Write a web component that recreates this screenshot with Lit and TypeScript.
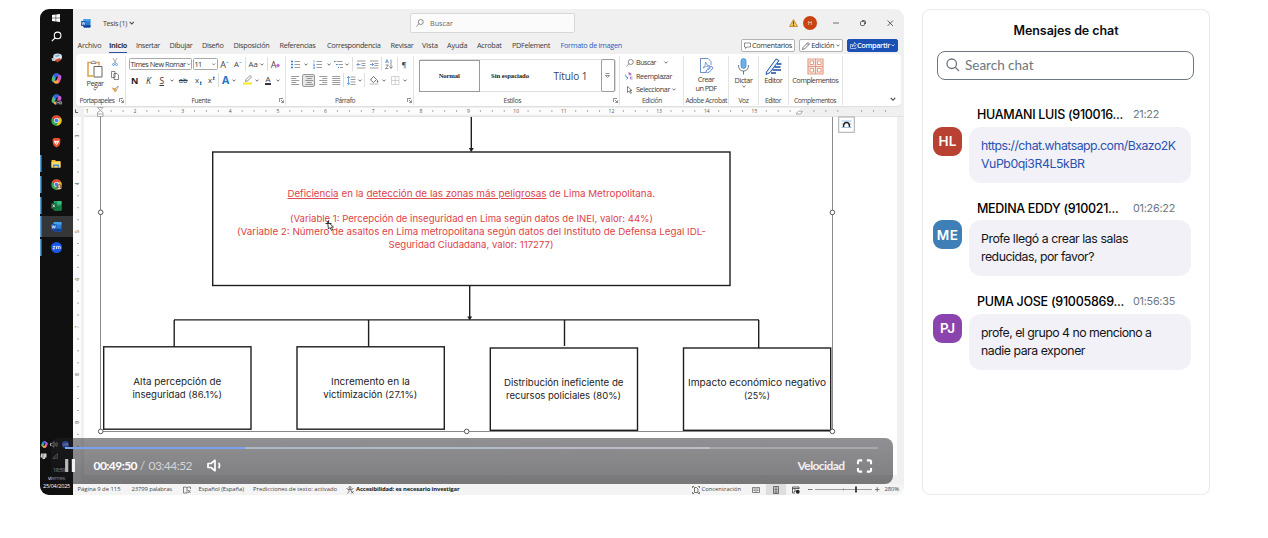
import { LitElement, html, svg, css, nothing } from "lit";
import { customElement, property } from "lit/decorators.js";

/* Text tracked so that it occupies a given width. */
@customElement("fit-text")
class FitText extends LitElement {
  @property({ type: Number }) w = 0;
  static styles = css`
    :host { display: inline-block; white-space: nowrap; flex: none; }
  `;
  render() {
    return html`<slot></slot>`;
  }
  firstUpdated() {
    const n = (this.textContent || "").length;
    if (!this.w || !n) return;
    const natural = this.getBoundingClientRect().width;
    this.style.letterSpacing = `${(this.w - natural) / n}px`;
  }
}

type Item = [number, number, unknown];

/* A toolbar line: items given by start and width along the line. */
const line = (origin: number, items: Item[], cls = "") => {
  let at = origin;
  return html`<div class="line ${cls}">${items.map(([x, w, body]) => {
    const gap = x - at;
    at = x + w;
    return html`<div class="cell" style="margin-left:${gap.toFixed(2)}px;width:${w}px">${body}</div>`;
  })}</div>`;
};

const t = (s: string, w: number, cls = "") => html`<fit-text class=${cls} w=${w}>${s}</fit-text>`;

const icon = (w: number, h: number, vb: string, body: unknown) =>
  html`<svg width=${w} height=${h} viewBox=${vb} fill="none">${body}</svg>`;

const chev = (w = 4) => icon(w, w * 0.75, "0 0 8 6", svg`<path d="M1 1.2 4 4.4 7 1.2" stroke="#444" stroke-width="1.5"/>`);
const sep = html`<i class="sep"></i>`;
const launcher = icon(5, 5, "0 0 10 10", svg`<path d="M1 8V1h7M4 4l5 5M9 4.5V9H4.500" stroke="#555" stroke-width="1.3"/>`);

const wordLogo = (w: number) => icon(w, w * 0.9, "0 0 20 18", svg`
  <rect x="5" y="0" width="15" height="18" rx="1.500" fill="#2b7cd3"/>
  <path d="M5 1.500Q5 0 6.500 0h12Q20 0 20 1.500V5H5z" fill="#41a5ee"/>
  <path d="M5 13h15v3.500q0 1.500-1.500 1.500h-12Q5 18 5 16.500z" fill="#103f91"/>
  <rect x="0" y="4" width="10.500" height="10.500" rx="1" fill="#185abd"/>
  <path d="M2 6.500 3.500 12 5.200 7 7 12 8.500 6.500" stroke="#fff" stroke-width="1.300"/>`);

const chromeArt = svg`
  <circle cx="10" cy="10" r="9.500" fill="#34a853"/>
  <path d="M1.800 5.200A9.500 9.500 0 0 1 18.200 5.200L18.300 5.700H10L6.300 12.200z" fill="#ea4335"/>
  <path d="M18.300 5.700A9.500 9.500 0 0 1 9.800 19.500L13.800 12.200 10 5.700z" fill="#fbbc04"/>
  <circle cx="10" cy="10" r="4.600" fill="#fff"/><circle cx="10" cy="10" r="3.600" fill="#4285f4"/>`;

const copilotArt = svg`
  <path d="M3.500 4.500Q5 1 9 1h3q2.500 0 3.500 3l.500 2H10L7 14q-1 3-3.500 2.500Q.500 15.500 1.500 11z" fill="#2ea8e0"/>
  <path d="M6 2q1-1 3-1h3q2.500 0 3.500 3l.500 2h-6L8 10 5 4z" fill="#3b62dd"/>
  <path d="M16.500 15.500Q15 19 11 19H8q-2.500 0-3.500-3L4 14h6l3-8q1-3 3.500-2.500 3 1 2 5.500z" fill="#ec5a93"/>
  <path d="M14 18q-1 1-3 1H8q-2.500 0-3.500-3L4 14h6l2-3z" fill="#f6a93d"/>
  <path d="M1.500 11l1.500-5 3.500 4L5.500 14l-3 1q-1.500-1-1-4z" fill="#58c45a"/>
  <path d="M13.500 5q1-2 3-1.500 3 1 2 5.500l-1 2.500-4-3z" fill="#b660e4"/>`;

const shared = css`
  .line { display: flex; align-items: center; }
  .cell { display: flex; align-items: center; justify-content: center; flex: none; }
  svg { display: block; flex: none; overflow: visible; }
`;

@customElement("task-bar")
class TaskBar extends LitElement {
  static styles = [shared, css`
    :host { display: flex; flex-direction: column; width: 33px; background: #101010; color: #ddd;
      font-family: "Open Sans", sans-serif; }
    .app { height: 21.1px; display: flex; align-items: center; justify-content: center; flex: none; padding-right: .500px;
      background: linear-gradient(transparent, transparent) no-repeat 0 50% / 1.500px 17px; }
    .app.first { height: 16px; padding-top: 1px; }
    .app.running { background-image: linear-gradient(#5a9fd8, #5a9fd8); }
    .app.active { background-color: #343638; background-size: 1.500px 21px; }
    .spacer { flex: 1; }
    .tray { height: 12px; }
    .clock { display: flex; flex-direction: column; align-items: flex-end; font-size: 5.500px; line-height: 8px;
      padding: 4px 3px 5px 0; color: #f2f2f2; }
    .mid { padding-right: 5px; }
    .date { color: #fff; }
  `];
  render() {
    const apps: [string, unknown][] = [
      ["first", icon(8, 8, "0 0 10 10", svg`<path d="M0 1.200 4.600.6v4.100H0zM5.200.500 10 0v4.700H5.200zM0 5.300h4.600v4.100L0 8.800zM5.200 5.300H10V10l-4.800-.600z" fill="#fff"/>`)],
      ["", icon(11, 11, "0 0 20 20", svg`<circle cx="12" cy="8" r="6" stroke="#fff" stroke-width="2"/><path d="M7.500 12.500 1.500 18.500" stroke="#fff" stroke-width="2.200"/>`)],
      ["", icon(11, 10, "0 0 20 18", svg`<ellipse cx="12" cy="7" rx="8" ry="6" fill="#dfe6ea"/><path d="M6 5l8-3 3 2-7 4z" fill="#86b7d8"/><path d="M8 12l8-3 2 4-7 4z" fill="#d94734"/><path d="M1 9l8 1-1 5-6-1z" fill="#c3cdd3"/>`)],
      ["", icon(11, 11, "0 0 20 20", copilotArt)],
      ["", icon(11, 11, "0 0 20 20", svg`${copilotArt}<rect x="9" y="12" width="12" height="8" rx="2" fill="#222"/><path d="M10.500 18v-4l2 2 2-2v4M16 14h3v4h-3z" stroke="#ddd" stroke-width="1"/>`)],
      ["", icon(11, 11, "0 0 20 20", chromeArt)],
      ["", icon(9, 11, "0 0 18 20", svg`<path d="M4 1h10l3 3-1 9q-1 4-7 7-6-3-7-7L1 4z" fill="#f0502c"/><path d="M5 6l4 1 4-1 1 2-2 4-3 3-3-3-2-4z" fill="#fff"/><path d="M7 8.500l2 1.500 2-1.500M9 10v2.500" stroke="#f0502c" stroke-width="1"/>`)],
      ["running", icon(10, 9, "0 0 20 18", svg`<path d="M1 2h7l2 2h9v13H1z" fill="#f0b93a"/><path d="M1 6h18v11H1z" fill="#fcd66b"/><path d="M4 11h12v6h-3v-3H7v3H4z" fill="#3f8fd0"/>`)],
      ["running", icon(11, 11, "0 0 20 20", svg`${chromeArt}<circle cx="15" cy="14.500" r="5" fill="#8f5a3c"/><circle cx="15" cy="13" r="2" fill="#f3c9a0"/><path d="M11.500 18q3.500-5 7 0z" fill="#e9e2d8"/>`)],
      ["running", icon(10.500, 9.500, "0 0 20 18", svg`<rect x="5" width="15" height="18" rx="1.500" fill="#21a366"/><path d="M12.500 0H20v6h-7.500z" fill="#33c481"/><path d="M5 9h15v9H5z" fill="#107c41"/><rect y="4" width="10.500" height="10.500" rx="1" fill="#185c37"/><path d="M3 6.500l4.500 5.500M7.500 6.500 3 12" stroke="#fff" stroke-width="1.500"/>`)],
      ["running active", wordLogo(10.5)],
      ["running", icon(11, 11, "0 0 20 20", svg`<circle cx="10" cy="10" r="10" fill="#1a56e8"/><path d="M3.500 8h4l-4 4.500h4M10 12.800V8.500q0-.800 1.700-.800t1.600.800v4.300M13.300 8.500q.300-.800 1.800-.800t1.600.800v4.300" stroke="#fff" stroke-width="1.500"/>`)],
    ];
    return html`
      ${apps.map(([c, a]) => html`<div class="app ${c}">${a}</div>`)}
      <div class="spacer"></div>
      ${line(40, [
        [40, 8, icon(7, 7, "0 0 20 20", copilotArt)],
        [50, 8, icon(8, 7, "0 0 16 14", svg`<path d="M1 5h3l4-3.500v11L4 9H1zM10.500 4.500q2 2.500 0 5M13 2.500q3.500 4.500 0 9" stroke="#fff" stroke-width="1.300"/>`)],
        [61.5, 7, icon(7, 7, "0 0 20 20", svg`<circle cx="10" cy="10" r="10" fill="#2f6cf5"/><path d="M4 8h3l-3 4.500h3M10 12.500V8h3v4.500M13 8h3v4.500" stroke="#fff" stroke-width="1.500"/>`)],
      ], "tray")}
      ${line(40, [
        [40, 7, icon(7, 7, "0 0 14 14", svg`<path d="M2 1h11v8h-3v3H5V9H1z" fill="#d0d0d0"/><path d="M6 1v8" stroke="#222"/>`)],
        [51.5, 6, icon(6, 6, "0 0 12 12", svg`<path d="M1 11 11 1v10zM5 7v4M8 4v7" stroke="#bbb"/>`)],
      ], "tray")}
      <div class="clock">
        <span class="mid">${t("18:59", 12)}</span>
        <span class="mid">${t("viernes", 17)}</span>
        <span class="date">${t("25/04/2025", 27)}</span>
      </div>`;
  }
}

@customElement("word-window")
class WordWindow extends LitElement {
  static styles = [shared, css`
    :host { display: flex; flex-direction: column; width: 831px; background: #f0f0f0; color: #3a3a3a;
      font-family: "Open Sans", sans-serif; font-size: 7px; line-height: 9px; }
    .title { height: 28px; }
    .tabs { height: 17px; font-size: 7.300px; }
    .tabs .cell { height: 15px; }
    .on { font-weight: 700; border-bottom: 1px solid #2b4fa3; height: 14px; line-height: 15px; }
    .blue { color: #2a5cc0; font-weight: 500; }
    .search { box-sizing: border-box; width: 165px; height: 20px; background: #fbfbfb; border: 1px solid #d8d8d8;
      border-radius: 2px; display: flex; align-items: center; padding-left: 5.500px; gap: 6px; font-size: 7.200px; color: #666; }
    .user { width: 14px; height: 14px; border-radius: 50%; background: #c8430f; color: #fbe3d8; font-size: 6px;
      display: flex; align-items: center; justify-content: center; }
    .btn { box-sizing: border-box; height: 13.500px; width: 100%; border: 1px solid #b3b3b3; border-radius: 2px;
      background: #fff; display: flex; align-items: center; justify-content: space-between; padding: 0 2px; color: #333; }
    .btn.share { background: #1b50b5; border-color: #1b50b5; color: #fff; font-weight: 600; }
    .ribbon { height: 52px; margin: 0 3px; background: #fff; border-radius: 4px; display: flex; box-shadow: 0 1px 1px #dedede; }
    .group { box-sizing: border-box; border-right: 1px solid #e3e3e3; display: flex; flex-direction: column; flex: none; height: 49px; margin-top: 2px; }
    .rest { flex: 1; display: flex; align-items: flex-end; justify-content: flex-end; padding: 0 5px 5px 0; }
    .body { height: 39px; flex: none; }
    .r { height: 16.200px; }
    .r3 { height: 13.500px; font-size: 7.200px; justify-content: flex-start; }
    .stack { display: flex; flex-direction: column; align-items: center; }
    .names { height: 11px; font-size: 6.700px; color: #444; }
    .sep { width: 1px; height: 14px; background: #dedede; }
    .box { box-sizing: border-box; width: 100%; height: 12.500px; border: 1px solid #a9a9a9; border-radius: 1.500px; display: flex;
      align-items: center; justify-content: space-between; padding: 0 1px; font-size: 7.300px; color: #333; }
    .pressed { box-sizing: border-box; width: 13px; height: 13px; border: 1px solid #999; background: #e8e8e8; border-radius: 2px;
      display: flex; align-items: center; justify-content: center; }
    .bold { font-weight: 700; font-size: 9px; color: #222; }
    .ital { font-style: italic; font-size: 9px; }
    .und { text-decoration: underline; font-size: 8.500px; }
    .strike { text-decoration: line-through; font-size: 7.500px; }
    .big { font-size: 9px; color: #444; }
    .mid { font-size: 7.800px; color: #444; }
    .bar { border-bottom: 2px solid #333; line-height: 8px; font-size: 8px; }
    .glow { color: #2374c6; font-weight: 700; font-size: 10.500px; }
    .gallery { display: flex; height: 33px; margin: 3px 0 0 5px; width: 197px; box-sizing: border-box; border: 1px solid #ddd; border-radius: 2px; align-items: center; }
    .style { box-sizing: border-box; height: 32px; display: flex; align-items: center; justify-content: center;
      font: 700 6.700px "Liberation Serif", serif; color: #222; }
    .style.sel { border: 1.500px solid #9a9a9a; width: 62px; margin-left: -1px; }
    .style.no { width: 61px; }
    .style.h1 { width: 61px; font: 400 10px "Open Sans", sans-serif; color: #33435f; }
    .more { box-sizing: border-box; width: 14px; height: 33px; border: 1px solid #9d9d9d; border-radius: 2px; display: flex; align-items: center; justify-content: center; }
    .tool { display: flex; flex-direction: column; align-items: center; padding-top: 1.500px; font-size: 7.300px; }
    .tool > svg:first-child { margin-bottom: 1.500px; }
    .ruler, .page { display: block; }
    .status { height: 11px; background: #f4f4f4; font-size: 5.900px; color: #444; }
    .status b { color: #222; }
    .view { background: #dedede; height: 11px; width: 20px; display: flex; align-items: center; justify-content: center; }
  `];

  private rows(kind: string) {
    const d: Record<string, string> = {
      left: "M0 1h16M0 5h10M0 9h16M0 13h10M0 17h16",
      center: "M0 1h16M3 5h10M0 9h16M3 13h10M0 17h16",
      right: "M0 1h16M6 5h10M0 9h16M6 13h10M0 17h16",
      full: "M0 1h16M0 5h16M0 9h16M0 13h16M0 17h16",
    };
    return icon(8.5, 9, "0 0 16 18", svg`<path d=${d[kind]} stroke="#666" stroke-width="1.300"/>`);
  }

  private titleBar() {
    return line(73, [
      [81, 10, wordLogo(9.5)],
      [103, 24, t("Tesis (1)", 24)],
      [129, 6, chev(5.5)],
      [409.5, 165, html`<div class="search">${icon(8, 8, "0 0 16 16", svg`<circle cx="9.500" cy="6" r="5" stroke="#555" stroke-width="1.300"/><path d="M6 9.500 1 15" stroke="#555" stroke-width="1.300"/>`)}${t("Buscar", 23)}</div>`],
      [788.5, 9, icon(9, 8, "0 0 18 16", svg`<path d="M9 1 17 15H1z" fill="#f3c464" stroke="#b9770e" stroke-width="1.500"/><path d="M9 5v6M9 12v2" stroke="#222" stroke-width="1.600"/>`)],
      [803, 14, html`<div class="user">H</div>`],
      [832.5, 6, icon(6, 6, "0 0 12 12", svg`<path d="M0 6h12" stroke="#444" stroke-width="1.500"/>`)],
      [860, 6, icon(6, 6, "0 0 12 12", svg`<rect x="1" y="3" width="8" height="8" rx="2" stroke="#333" stroke-width="1.500"/><path d="M4 1h4q3 0 3 3v4" stroke="#333" stroke-width="1.500"/>`)],
      [887, 6.5, icon(6.5, 6.5, "0 0 12 12", svg`<path d="M1 1l10 10M11 1 1 11" stroke="#333" stroke-width="1.400"/>`)],
    ], "title");
  }

  private tabBar() {
    const tabs: [string, number, number, string][] = [
      ["Archivo", 77.5, 24, ""], ["Inicio", 109, 18, "on"], ["Insertar", 136, 24, ""], ["Dibujar", 169.5, 23, ""],
      ["Diseño", 202, 21.5, ""], ["Disposición", 233.5, 36, ""], ["Referencias", 279.5, 36, ""],
      ["Correspondencia", 327, 53.5, ""], ["Revisar", 390.5, 23, ""], ["Vista", 422, 16, ""], ["Ayuda", 447, 20.5, ""],
      ["Acrobat", 477, 24.5, ""], ["PDFelement", 512, 38, ""], ["Formato de imagen", 560.5, 61.5, "blue"],
    ];
    return line(73, [
      ...tabs.map(([s, x, w, c]) => [x, w, t(s, w, c)] as Item),
      [740.5, 54.5, html`<div class="btn">${icon(7, 7, "0 0 14 14", svg`<path d="M1 2h12v8H6l-3 3v-3H1z" stroke="#444" stroke-width="1.200"/>`)}${t("Comentarios", 40)}</div>`],
      [798.5, 44.5, html`<div class="btn">${icon(8, 8, "0 0 16 16", svg`<path d="M1 15l1-4L12 1l3 3L5 14zM10 3l3 3" stroke="#333" stroke-width="1.300"/>`)}${t("Edición", 23)}${chev(4)}</div>`],
      [846.5, 51, html`<div class="btn share">${icon(7, 7, "0 0 14 14", svg`<path d="M5 5H1v8h11v-3M9 1l4 4-4 4V7Q5 7 4 10 4 4 9 3.500z" stroke="#fff" stroke-width="1.200"/>`)}${t("Compartir", 33)}${icon(4, 3, "0 0 8 6", svg`<path d="M1 1l3 3 3-3" stroke="#fff" stroke-width="1.500"/>`)}</div>`],
    ], "tabs");
  }

  private listIcon(dots: unknown) {
    return icon(9, 9, "0 0 18 18", svg`${dots}<path d="M7 3h11M7 9h11M7 15h11" stroke="#666" stroke-width="1.300"/>`);
  }

  private ribbon() {
    const g = (w: number, body: unknown, names: unknown) =>
      html`<div class="group" style="width:${w}px"><div class="body">${body}</div>${names}</div>`;
    const A = (s: string, cls: string) => html`<span class=${cls}>${s}</span>`;
    return html`<div class="ribbon">
      ${g(49.5, html`<div class="line">
          <div class="cell tool" style="margin-left:8px;width:22px;flex-direction:column">
            ${icon(16, 18, "0 0 32 36", svg`<path d="M7 5H2v27h10M19 5h5v6" stroke="#e3a046" stroke-width="3"/><path d="M8 7V4h3q2-5 4 0h3v3z" stroke="#666" stroke-width="1.500" fill="#fff"/><path d="M14 13h16v21H14z" fill="#fff" stroke="#666" stroke-width="2"/>`)}
            ${t("Pegar", 17)}${chev(4)}
          </div>
          <div class="cell stack" style="width:18px;flex-direction:column;gap:5px;padding-top:2px">
            ${icon(6, 8, "0 0 12 16", svg`<path d="M2 0l6 11M10 0 4 11" stroke="#777" stroke-width="1.200"/><circle cx="3" cy="13" r="2" stroke="#2b7cd3" stroke-width="1.300"/><circle cx="9" cy="13" r="2" stroke="#2b7cd3" stroke-width="1.300"/>`)}
            ${icon(8, 9, "0 0 16 18", svg`<path d="M1 1h7v12H1zM6 5h6l3 3v9H6z" stroke="#555" stroke-width="1.400" fill="#fff"/>`)}
            ${icon(8, 8, "0 0 16 16", svg`<path d="M1 5l7 1 4 5-4 4z" fill="#e8a552"/><path d="M9 7l5-5 1 1-4 6z" stroke="#555" fill="#fff"/>`)}
          </div></div>`,
        line(76, [[79.5, 35, t("Portapapeles", 35)], [118.5, 5, launcher]], "names"))}
      ${g(160.5, html`
        ${line(125.5, [
          [128.5, 63.5, html`<div class="box">${t("Times New Romar", 55)}${chev(3.5)}</div>`],
          [192.5, 25, html`<div class="box">${t("11", 7)}${chev(3.5)}</div>`],
          [220, 9, html`${A("A", "big")}${icon(3, 6, "0 0 6 12", svg`<path d="M1 4l2-2 2 2" stroke="#2b7cd3" stroke-width="1.300"/>`)}`],
          [234, 8, html`${A("A", "mid")}${icon(3, 6, "0 0 6 12", svg`<path d="M1 2l2 2 2-2" stroke="#2b7cd3" stroke-width="1.300"/>`)}`],
          [244.5, 1, sep],
          [248.5, 9.5, A("Aa", "mid")], [259.5, 4, chev()],
          [267, 1, sep],
          [271, 9, html`${A("A", "big")}${icon(4, 8, "0 0 8 16", svg`<path d="M0 11l4-4 4 4-4 4z" fill="#c35fd0"/>`)}`],
        ], "r")}
        ${line(125.5, [
          [131, 7.5, A("N", "bold")], [145.5, 6, A("K", "ital")], [159, 5.5, A("S", "und")], [169.5, 4, chev()],
          [178.5, 9.5, A("ab", "strike")],
          [195, 7, html`${A("x", "mid")}<svg width="3" height="9" viewBox="0 0 3 9"><path d="M1 6h1.500L1 8.500h1.500" stroke="#2b7cd3" stroke-width=".800"/></svg>`],
          [208, 7, html`${A("x", "mid")}<svg width="3" height="9" viewBox="0 0 3 9"><path d="M1 1h1.500L1 3.500h1.500" stroke="#2b7cd3" stroke-width=".800"/></svg>`],
          [218, 1, sep],
          [221, 9, A("A", "glow")], [232, 4, chev()],
          [242.5, 9.5, icon(9, 10, "0 0 18 20", svg`<path d="M5 13l1-4 8-8 3 3-8 8z" stroke="#555" stroke-width="1.300"/><path d="M0 15h18v4H0z" fill="#f7ee1b"/>`)],
          [254.5, 4, chev()],
          [263.5, 9, A("A", "bar")], [275.5, 4, chev()],
        ], "r")}`,
        line(125.5, [[191.5, 19, t("Fuente", 19)], [279, 5, launcher]], "names"))}
      ${g(127.5, html`
        ${line(286, [
          [291, 9, this.listIcon(svg`<path d="M0 3h4M0 9h4M0 15h4" stroke="#2b7cd3" stroke-width="2.600"/>`)], [303.5, 4, chev()],
          [312.5, 9, this.listIcon(svg`<path d="M2 0v5M0 8h3L1 11h3M0 14h3v3H0" stroke="#2b7cd3" stroke-width="1.200"/>`)], [326.5, 4, chev()],
          [333.5, 9, icon(9, 9, "0 0 18 18", svg`<path d="M0 3h3M4 9h3M8 15h2" stroke="#2b7cd3" stroke-width="2"/><path d="M5 3h12M9 9h9M12 15h6" stroke="#666" stroke-width="1.300"/>`)], [344.5, 4, chev()],
          [352, 1, sep],
          [356.5, 8.5, icon(8.5, 9, "0 0 17 18", svg`<path d="M0 2h17M9 7h8M9 11h8M0 16h17" stroke="#666" stroke-width="1.300"/><path d="M7 9H0M3 6 0 9l3 3" stroke="#2b7cd3" stroke-width="1.400"/>`)],
          [370, 8.5, icon(8.5, 9, "0 0 17 18", svg`<path d="M0 2h17M9 7h8M9 11h8M0 16h17" stroke="#666" stroke-width="1.300"/><path d="M0 9h7M4 6l3 3-3 3" stroke="#2b7cd3" stroke-width="1.400"/>`)],
          [381, 1, sep],
          [385, 8, icon(8, 10, "0 0 16 20", svg`<path d="M1 8l3-7 3 7M2 6h4" stroke="#2b7cd3" stroke-width="1.300"/><path d="M1 12h6l-6 7h6M12 1v17M9 15l3 4 3-4" stroke="#555" stroke-width="1.300"/>`)],
          [396.5, 1, sep],
          [401, 6, A("¶", "mid")],
        ], "r")}
        ${line(286, [
          [291, 8.5, this.rows("left")], [302, 13.5, html`<div class="pressed">${this.rows("center")}</div>`],
          [318.5, 8.5, this.rows("right")], [331.5, 8.5, this.rows("full")],
          [343, 1, sep],
          [346.5, 8.5, icon(8.5, 9, "0 0 17 18", svg`<path d="M7 2h10M7 7h10M7 12h10M7 17h10" stroke="#666" stroke-width="1.300"/><path d="M3 1v16M0 4l3-3 3 3M0 14l3 3 3-3" stroke="#2b7cd3" stroke-width="1.400"/>`)], [357.5, 4, chev()],
          [364, 1, sep],
          [369, 10, icon(10, 9, "0 0 20 18", svg`<path d="M9 1 3 8l6 5 6-6z" stroke="#444" stroke-width="1.500"/><path d="M17 8q3 5 0 5t0-5" fill="#2b5fa0"/><path d="M1 16h18" stroke="#bbb" stroke-width="2"/>`)], [381.5, 4, chev()],
          [390.5, 8.5, icon(8.5, 9, "0 0 17 18", svg`<path d="M1 1h15v16H1zM8.500 1v16M1 9h15" stroke="#bbb" stroke-width="1.300"/>`)], [402.5, 4, chev()],
        ], "r")}`,
        line(286, [[335, 20, t("Párrafo", 20)], [407, 5, launcher]], "names"))}
      ${g(206, html`<div class="gallery">
          <div class="style sel">${t("Normal", 21)}</div>
          <div class="style no">${t("Sin espaciado", 38)}</div>
          <div class="style h1">${t("Título 1", 34)}</div>
          <div class="more">${icon(5, 6, "0 0 10 12", svg`<path d="M1 1h8M1 5l4 4 4-4z" stroke="#555" stroke-width="1.300"/>`)}</div>
        </div>`,
        line(413.5, [[503.5, 17.5, t("Estilos", 17.5)], [613, 5, launcher]], "names"))}
      ${g(64.5, html`
        ${line(619.5, [[625.5, 8, icon(8, 8, "0 0 16 16", svg`<circle cx="9.500" cy="6" r="5" stroke="#555" stroke-width="1.300"/><path d="M6 9.500 1 15" stroke="#555" stroke-width="1.300"/>`)], [636, 20, t("Buscar", 20)], [663.5, 4, chev()]], "r3")}
        ${line(619.5, [[625, 8, icon(8, 8, "0 0 16 16", svg`<path d="M1 5q0 7 5 7M3 9l3 3-3 3" stroke="#2b7cd3" stroke-width="1.400"/><path d="M8 0v6h4V3H8M15 10h-4v4h4" stroke="#a34fb5" stroke-width="1.500"/>`)], [636, 36, t("Reemplazar", 36)]], "r3")}
        ${line(619.5, [[625.5, 7, icon(7, 8, "0 0 14 16", svg`<path d="M3 1v12l3-3 3 5 2-1-3-5h4z" stroke="#444" stroke-width="1.300"/>`)], [636, 34, t("Seleccionar", 34)], [672, 4, chev()]], "r3")}`,
        line(619.5, [[642, 20, t("Edición", 20)]], "names"))}
      ${g(45, html`<div class="tool">${icon(15, 16, "0 0 30 32", svg`<path d="M14 29H3V1h15l6 6v7" stroke="#5b83c9" stroke-width="1.800"/><path d="M8 20q6-5 5-12 3 9 9 8-8 0-14 4z" stroke="#5b83c9" stroke-width="1.500"/><path d="M16 23l7-6q4-1 5 3l-7 8q-5 3-7 0zM18 24l6-5" stroke="#5b83c9" stroke-width="1.800" fill="#fff"/>`)}${t("Crear", 16.5)}${t("un PDF", 21)}</div>`,
        line(684, [[685.5, 41.5, t("Adobe Acrobat", 41.5)]], "names"))}
      ${g(30, html`<div class="tool">${icon(11, 17, "0 0 22 34", svg`<rect x="6" y="1" width="10" height="20" rx="5" fill="#6cb2e8" stroke="#2b7cd3" stroke-width="1.300"/><path d="M1 14q0 12 10 12t10-12M11 26v7" stroke="#555" stroke-width="1.600"/>`)}${t("Dictar", 18)}${chev(4)}</div>`,
        line(729, [[738.5, 10, t("Voz", 10)]], "names"))}
      ${g(29.5, html`<div class="tool">${icon(17, 17, "0 0 34 34", svg`<path d="M3 28 22 2l6 3L10 29l-8 4z" stroke="#1d56a5" stroke-width="2" fill="#eaf2fb"/><path d="M24 12h9M19 18h12M15 24h17M12 30h10" stroke="#174f9f" stroke-width="3.400"/>`)}${t("Editor", 18)}</div>`,
        line(759, [[765, 16, t("Editor", 16)]], "names"))}
      ${g(54.5, html`<div class="tool">${icon(17, 17, "0 0 34 34", svg`<path d="M2 2h30v30H2z" fill="#fbe3dc" stroke="#e59e8b" stroke-width="2.400"/><path d="M17 2v30M2 17h30M6 6h7v7H6zM21 6h7v7h-7zM6 21h7v7H6zM21 21h7v7h-7z" stroke="#e08a74" stroke-width="1.600" fill="#fff"/>`)}${t("Complementos", 46)}</div>`,
        line(788.5, [[794, 42, t("Complementos", 42)]], "names"))}
      <div class="rest">${chev(6)}</div>
    </div>`;
  }

  private ruler() {
    const step = 47.65;
    const marks = [];
    for (let i = 0; i < 17; i++) {
      const x = 87.3 + i * step;
      if (i < 15) marks.push(svg`<text x=${x} y="113" text-anchor="middle" font-size="5" fill="#555">${i + 1}</text>`);
      for (let q = 1; q < 4; q++) {
        const tx = x + (q * step) / 4;
        if (tx < 898 && Math.abs(tx - 99) > 2) marks.push(svg`<path d="M${tx} 110v2" stroke="#999" stroke-width=".800"/>`);
      }
    }
    return html`<svg class="ruler" width="831" height="11" viewBox="73 106 831 11" fill="none">
      <rect x="84" y="108" width="716" height="6.500" fill="#fcfcfc"/>
      <path d="M75.500 109.500v3h2.500" stroke="#555"/>
      ${marks}
      <path d="M84 116.500h820" stroke="#e2e2e2"/>
      <path d="M97.500 107.500h5.500l-2.700 3zM97.500 112.500l2.700-2 2.800 2v4h-5.500zM97.500 114h5.500" fill="#fff" stroke="#999" stroke-width=".800"/>
      <path d="M796 114l2.500-2.800h4L800.500 114z" fill="#fff" stroke="#999" stroke-width=".800"/>
    </svg>`;
  }

  private page() {
    const red = "#dd3f49";
    const tx = (x: number, y: number, w: number, s: string, fill = "#1c1c1c", u = false) =>
      svg`<text x=${x} y=${y} textLength=${w} lengthAdjust="spacingAndGlyphs" fill=${fill} text-decoration=${u ? "underline" : nothing}>${s}</text>`;
    const knob = (x: number, y: number) => svg`<circle cx=${x} cy=${y} r="2.300" fill="#fff" stroke="#555" stroke-width="1"/>`;
    const v = [];
    for (let i = 0; i < 7; i++) {
      const y = 136.2 + i * 47.7;
      v.push(svg`<text x="77.500" y=${y} font-size="4.500" fill="#555" text-anchor="middle" dominant-baseline="middle" transform="rotate(-90 77.500 ${y})">${i + 3}</text>`);
      for (let q = -1; q < 3; q++) if (q) v.push(svg`<path d="M77 ${y + q * 11.9}h2" stroke="#999" stroke-width=".800"/>`);
    }
    return html`<svg class="page" width="831" height="367" viewBox="73 117 831 367" fill="none" font-family="Inter, sans-serif" font-size="9.300">
      <rect x="84" y="117" width="813" height="358" fill="#fff"/>
      <rect x="73" y="117" width="8" height="367" fill="#fbfbfb"/>
      ${v}
      <path d="M100.500 117v314.500h732V117" stroke="#8a8a8a"/>
      <g stroke="#1e1e1e" stroke-width="1.400">
        <rect x="212.700" y="152" width="517.300" height="133.500"/>
        <rect x="103.700" y="346.800" width="147.300" height="82.400"/>
        <rect x="297" y="346.800" width="147.300" height="82.400"/>
        <rect x="490.300" y="348" width="147.200" height="82.300"/>
        <rect x="683.500" y="348" width="147.200" height="82.300"/>
        <path d="M471.300 117v34M469.700 286v33M174 319.900h585M174.200 320v27M368.600 320v27M564.500 320v26M758.700 320v28"/>
      </g>
      <path d="M468.800 148h5l-2.500 4zM467.200 316.500h5l-2.500 3.800z" fill="#1e1e1e"/>
      ${tx(287.5, 197, 51, "Deficiencia", red, true)}
      ${tx(341.5, 197, 22, "en la", red)}
      ${tx(366.5, 197, 180, "detección de las zonas más peligrosas", red, true)}
      ${tx(549, 197, 106, "de Lima Metropolitana.", red)}
      ${tx(290, 222, 363, "(Variable 1: Percepción de inseguridad en Lima según datos de INEI, valor: 44%)", red)}
      ${tx(237, 234.7, 469, "(Variable 2: Número de asaltos en Lima metropolitana según datos del Instituto de Defensa Legal IDL-", red)}
      ${tx(388.5, 247.5, 165, "Seguridad Ciudadana, valor: 117277)", red)}
      ${tx(133.3, 384.6, 88, "Alta percepción de")}
      ${tx(132.5, 397.6, 89.5, "inseguridad (86.1%)")}
      ${tx(331, 384.6, 79, "Incremento en la")}
      ${tx(323.3, 397.6, 94, "victimización (27.1%)")}
      ${tx(504, 385.8, 119.5, "Distribución ineficiente de")}
      ${tx(506, 398.5, 115, "recursos policiales (80%)")}
      ${tx(688, 385.8, 138, "Impacto económico negativo")}
      ${tx(744, 398.5, 26, "(25%)")}
      ${knob(100.7, 212.3)}${knob(832.4, 212.4)}${knob(100.7, 431.4)}${knob(466.7, 431.4)}${knob(832.4, 431.4)}
      <path d="M327.500 221.500l1 7.500 1.500-1.500 1.500 3 1-.500-1-3h2z" fill="#fff" stroke="#333" stroke-width=".900"/>
      <path d="M325.500 223.500h6M328.500 220.500v3" stroke="#333"/>
      <rect x="838.700" y="117" width="15.600" height="15.300" fill="#fff" stroke="#aaa"/>
      <path d="M841.500 121h10M841.500 127.500h10M841.500 124h2.500M849 124h2.500" stroke="#8fbbe2" stroke-width=".900"/>
      <path d="M843.500 127q0-4.500 3-4.500t3 4.500" stroke="#222" stroke-width="1.500"/>
    </svg>`;
  }

  private status() {
    const pg = (b: unknown) => icon(8, 8, "0 0 16 16", b);
    return line(73, [
      [77.5, 43, t("Página 9 de 115", 43)],
      [131.5, 40.5, t("23799 palabras", 40.5)],
      [182.5, 8, pg(svg`<path d="M8 3v11H1V2q5 0 7 1 2-1 7-1v4M10 8l5 6M15 8l-5 6" stroke="#444" stroke-width="1.300"/>`)],
      [198.5, 45.5, t("Español (España)", 45.5)],
      [253, 84, t("Predicciones de texto: activado", 84)],
      [346, 8, pg(svg`<circle cx="8" cy="3" r="2" stroke="#333" stroke-width="1.300"/><path d="M1 5l5 2h4l5-2M6 7v4l-3 4M10 7v3M10 10l5 5M15 10l-5 5" stroke="#333" stroke-width="1.300"/>`)],
      [356, 103.5, html`<b>${t("Accesibilidad: es necesario investigar", 103.5)}</b>`],
      [692, 8, pg(svg`<path d="M1 4V1h3M12 1h3v3M1 12v3h3M12 15h3v-3M5 3h4l3 3v7H5z" stroke="#333" stroke-width="1.300"/>`)],
      [701.5, 39.5, t("Concentración", 39.5)],
      [752, 8, pg(svg`<path d="M1 3h6l1 1 1-1h6v10H9l-1 1-1-1H1zM8 4v10M3 6h3M3 9h3M10 6h3M10 9h3" stroke="#444" stroke-width="1.300"/>`)],
      [766, 20, html`<div class="view">${pg(svg`<path d="M3 1h10v14H3zM5 4h6M5 7h6M5 10h6M5 12.500h6" stroke="#333" stroke-width="1.300"/>`)}</div>`],
      [792, 8, pg(svg`<path d="M14 6V2H1v12h5M1 5h13M4 8h4M4 11h3" stroke="#333" stroke-width="1.500"/><circle cx="11.500" cy="11.500" r="3.800" fill="#222"/>`)],
      [808, 4.5, icon(4.5, 5, "0 0 9 10", svg`<path d="M0 5h9" stroke="#444" stroke-width="1.400"/>`)],
      [815, 57, icon(57, 7, "0 0 57 7", svg`<path d="M0 3.500h57M28.500 2.500v2" stroke="#777" stroke-width=".700"/><path d="M41 .500v6" stroke="#444" stroke-width="2"/>`)],
      [874.5, 4.5, icon(4.5, 5, "0 0 9 10", svg`<path d="M0 5h9M4.500.500v9" stroke="#444" stroke-width="1.400"/>`)],
      [884.5, 14.5, t("280%", 14.5)],
    ], "status");
  }

  render() {
    return html`${this.titleBar()}${this.tabBar()}${this.ribbon()}${this.ruler()}${this.page()}${this.status()}`;
  }
}

@customElement("player-controls")
class PlayerControls extends LitElement {
  static styles = [shared, css`
    :host { display: flex; flex-direction: column; border-radius: 8px; background: linear-gradient(rgba(35, 35, 42, .5), rgba(19, 19, 22, .55));
      color: #fff; font-family: Lato, sans-serif; font-size: 12px; }
    .track { display: flex; height: 2px; margin: 9px 15px 0 14px; background: rgba(205, 205, 212, .42); }
    .played { width: 180px; background: #7ba0ee; }
    .buffer { width: 465px; background: linear-gradient(90deg, #a9b7c8, #b4bac6 60%, #bdbec6); }
    .line { flex: 1; padding-bottom: 2px; }
    .now { font-weight: 700; }
    .total { color: #d4d4da; }
    .speed { font-weight: 700; color: #f0f0f2; }
  `];
  render() {
    return html`
      <div class="track"><div class="played"></div><div class="buffer"></div></div>
      ${line(51, [
        [65, 10, icon(10, 13, "0 0 10 13", svg`<path d="M1.700 0v13" stroke="#b9b9bd" stroke-width="3.200"/><path d="M8.400 0v13" stroke="#f0f0f0" stroke-width="3.200"/>`)],
        [93.5, 43.5, html`<span class="now">${t("00:49:50", 43.5)}</span>`],
        [140, 5, html`<span class="total">/</span>`],
        [148.5, 43.5, html`<span class="total">${t("03:44:52", 43.5)}</span>`],
        [207, 14, icon(14, 13, "0 0 28 26", svg`<path d="M2 9h6l8-6.500v21L8 17H2z" stroke="#fff" stroke-width="3.400" stroke-linejoin="round"/><path d="M23 8q2 1 2 5t-2 5" stroke="#fff" stroke-width="3.600"/>`)],
        [797.5, 47, html`<span class="speed">${t("Velocidad", 47)}</span>`],
        [856, 16, icon(15, 14, "0 0 32 28", svg`<path d="M2 10V5q0-3 3-3h6M21 2h6q3 0 3 3v5M30 18v5q0 3-3 3h-6M11 26H5q-3 0-3-3v-5" stroke="#fff" stroke-width="4.400"/>`)],
      ])}`;
  }
}

@customElement("chat-panel")
class ChatPanel extends LitElement {
  static styles = [shared, css`
    :host { box-sizing: border-box; display: flex; flex-direction: column; width: 288px; border: 1px solid #e9e9ee; border-radius: 8px;
      font-family: Inter, sans-serif; font-size: 12.500px; color: #131619; padding: 12px 10px 0; }
    h2 { margin: 0; font-size: 12.500px; font-weight: 600; line-height: 18px; text-align: center; color: #0b0d12; }
    .search { box-sizing: border-box; height: 29px; margin: 11px 5px 0 4px; border: 1px solid #6e7680; border-radius: 8px; display: flex;
      align-items: center; gap: 5px; padding: 0 0 2px 8px; font: 13.500px Lato, sans-serif; color: #6e7680; }
    ul { list-style: none; margin: 25.500px 0 0; padding: 0; }
    li { display: grid; grid-template-columns: 29px 222px; column-gap: 7px; grid-template-rows: 21px auto; padding-bottom: 16.500px; }
    .head { grid-column: 2; display: flex; align-items: center; padding: 0 0 3px 8px; box-sizing: border-box; }
    .name { width: 156px; font-weight: 500; color: #000; }
    .time { font-size: 10.800px; color: #6e7680; }
    .avatar { height: 29px; border-radius: 9px; color: #fff; font-size: 13.500px; font-weight: 600; display: flex; align-items: center; justify-content: center; }
    .red { background: #b94132; } .blue { background: #3f7fb8; } .purple { background: #8b44ad; }
    .bubble { box-sizing: border-box; height: 56px; background: #f2f1f7; border-radius: 12px; padding: 10px 12px; line-height: 18px;
      display: flex; flex-direction: column; align-items: flex-start; font-size: 12.300px; }
    .link { color: #2a52b0; }
  `];
  render() {
    const list = [
      { c: "red", i: "HL", iw: 18, n: "HUAMANI LUIS (910016...", nw: 146, tm: "21:22", tw: 26, link: true, l: [["https://chat.whatsapp.com/Bxazo2K", 194.5], ["VuPb0qi3R4L5kBR", 103.5]] },
      { c: "blue", i: "ME", iw: 21.5, n: "MEDINA EDDY (910021...", nw: 141.5, tm: "01:26:22", tw: 42, link: false, l: [["Profe llegó a crear las salas", 147], ["reducidas, por favor?", 113]] },
      { c: "purple", i: "PJ", iw: 15, n: "PUMA JOSE (91005869...", nw: 147, tm: "01:56:35", tw: 42, link: false, l: [["profe, el grupo 4 no menciono a", 170.5], ["nadie para exponer", 104]] },
    ] as const;
    return html`
      <h2>${t("Mensajes de chat", 105)}</h2>
      <div class="search">${icon(14, 14, "0 0 28 28", svg`<circle cx="11.500" cy="11.500" r="9.500" stroke="#6e7680" stroke-width="2.600"/><path d="M18.500 18.500 26 26" stroke="#6e7680" stroke-width="2.600"/>`)}${t("Search chat", 68.5)}</div>
      <ul>${list.map((m) => html`<li>
        <div class="head"><span class="name">${t(m.n, m.nw)}</span><span class="time">${t(m.tm, m.tw)}</span></div>
        <div class="avatar ${m.c}">${t(m.i, m.iw)}</div>
        <div class="bubble ${m.link ? "link" : ""}">${m.l.map(([s, w]) => t(s as string, w as number))}</div>
      </li>`)}</ul>`;
  }
}

@customElement("app-root")
class AppRoot extends LitElement {
  static styles = css`
    :host { display: flex; box-sizing: border-box; width: 1268px; height: 538px; padding: 9px 40px 43px; gap: 18px; background: #fff; }
    .stage { position: relative; display: flex; width: 864px; height: 486px; flex: none; border-radius: 9px; overflow: hidden; }
    .controls { position: absolute; left: 11px; right: 11px; bottom: 11px; height: 46px; }
  `;
  render() {
    return html`
      <div class="stage">
        <task-bar></task-bar>
        <word-window></word-window>
        <player-controls class="controls"></player-controls>
      </div>
      <chat-panel></chat-panel>`;
  }
}
